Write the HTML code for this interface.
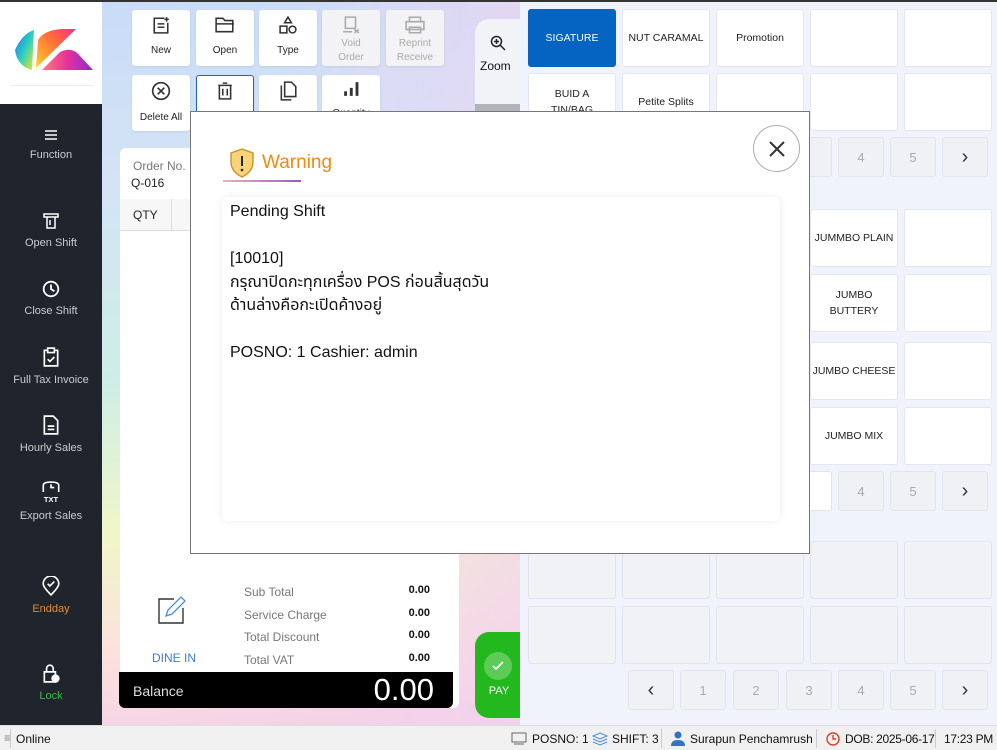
<!DOCTYPE html>
<html><head><meta charset="utf-8"><style>
*{box-sizing:border-box;margin:0;padding:0}
body{width:997px;height:750px;overflow:hidden;position:relative;font-family:"Liberation Sans",sans-serif;background:#fff}
.a{position:absolute}
.bg{left:102px;top:0;width:418px;height:725px;background:linear-gradient(175deg,#c9dcf7 0%,#d4e4f6 25%,#cdeee6 50%,#f1f6c8 70%,#fae3dc 85%,#f4cfe8 100%)}
.bg2{left:102px;top:0;width:418px;height:725px;background:linear-gradient(90deg,rgba(255,255,255,0) 40%,rgba(240,210,240,.6) 100%)}
.side{left:0;top:104px;width:102px;height:621px;background:#1f242d}
.si{position:absolute;left:0;width:102px;text-align:center;color:#c9ccd1;font-size:11px;white-space:nowrap}
.si svg{display:block;margin:0 auto 7px}
.tb{position:absolute;width:58px;height:56px;background:#fff;border-radius:3px;text-align:center;font-size:10px;color:#222;box-shadow:0 1px 2px rgba(0,0,0,.08);white-space:nowrap}
.tb svg{display:block;margin:6px auto 11px}
.tb.dis{background:#f3f3f5;color:#aaa}
.rp{left:520px;top:0;width:477px;height:725px;background:#f0f3fb}
.g{position:absolute;width:88px;height:58px;background:#fff;border:1px solid #e3e6ee;border-radius:3px;font-size:10.5px;color:#222;display:flex;align-items:center;justify-content:center;text-align:center;line-height:16px}
.ge{background:#f0f2f6;border-color:#e2e4ea}
.pg{position:absolute;width:46px;height:40px;background:#f0f1f4;border:1px solid #e2e4ea;border-radius:3px;color:#aaa;font-size:13px;display:flex;align-items:center;justify-content:center}
.status{left:0;top:725px;width:997px;height:25px;background:#f0f0f0;border-top:1px solid #ddd;font-size:12px;color:#111}
.status span{position:absolute;top:6px;white-space:nowrap}
.sep{position:absolute;top:3px;width:1px;height:19px;background:#ccc}
</style></head><body>
<div class="a" style="left:0;top:0;width:997px;height:2px;background:#333;z-index:5"></div>
<div class="a bg"></div><div class="a bg2"></div>
<div class="a" style="left:0;top:0;width:102px;height:104px;background:#fff"></div>
<svg class="a" style="left:12px;top:28px" width="84" height="44" viewBox="0 0 84 44">
<defs><linearGradient id="l1" x1="0" y1="0" x2="1" y2="1"><stop offset="0" stop-color="#3b5bff"/><stop offset=".5" stop-color="#27d0c0"/><stop offset="1" stop-color="#f7e22a"/></linearGradient>
<linearGradient id="l2" x1="0" y1="1" x2="1" y2="0"><stop offset="0" stop-color="#ffd02a"/><stop offset=".6" stop-color="#ff6a3a"/><stop offset="1" stop-color="#ff2b8a"/></linearGradient>
<linearGradient id="l3" x1="0" y1="0" x2="1" y2="0"><stop offset="0" stop-color="#ff7a7a"/><stop offset=".5" stop-color="#e7309a"/><stop offset="1" stop-color="#8a2be2"/></linearGradient></defs>
<path d="M3 22 Q10 6 22 2 L20 42 Q5 38 3 22Z" fill="url(#l1)"/>
<path d="M24 40 L26 12 Q32 2 50 1 L64 1 Z" fill="url(#l2)"/>
<path d="M30 42 L48 24 Q60 18 68 28 L81 42Z" fill="url(#l3)"/>
</svg>
<div class="a" style="left:10px;top:85px;width:84px;height:1px;background:#eee"></div>
<div class="a side"></div>
<div class="si" style="top:128px"><svg width="16" height="14" viewBox="0 0 16 14"><path d="M2 3h12M2 7h12M2 11h12" stroke="#fff" stroke-width="1.6"/></svg>Function</div>
<div class="si" style="top:212px"><svg width="18" height="18" viewBox="0 0 16 18" fill="none" stroke="#fff" stroke-width="1.5"><path d="M1 2h14v3H1zM4 5v11h8V5M7 8v5"/></svg>Open Shift</div>
<div class="si" style="top:280px"><svg width="18" height="18" viewBox="0 0 16 16" fill="none" stroke="#fff" stroke-width="1.6"><circle cx="8" cy="8" r="6.5"/><path d="M8 4v4l3 2"/></svg>Close Shift</div>
<div class="si" style="top:347px"><svg width="18" height="20" viewBox="0 0 16 18" fill="none" stroke="#fff" stroke-width="1.5"><path d="M5 3H2v14h12V3h-3M5 1h6v4H5zM5 11l2 2 4-4"/></svg>Full Tax Invoice</div>
<div class="si" style="top:415px"><svg width="16" height="20" viewBox="0 0 14 18" fill="none" stroke="#fff" stroke-width="1.5"><path d="M1 1h8l4 4v12H1zM4 10h6M4 13h6"/></svg>Hourly Sales</div>
<div class="si" style="top:481px"><svg width="22" height="22" viewBox="0 0 20 20" fill="none" stroke="#fff" stroke-width="1.5"><path d="M3 10V4Q3 1 10 1Q17 1 17 4V10M10 3v3h3"/><text x="10" y="19" font-size="7" fill="#fff" stroke="none" text-anchor="middle" font-weight="bold" font-family="Liberation Sans">TXT</text></svg>Export Sales</div>
<div class="si" style="top:576px;color:#e8892c"><svg width="18" height="20" viewBox="0 0 16 18" fill="none" stroke="#fff" stroke-width="1.5"><path d="M8 17Q1 10 1 7a7 7 0 0 1 14 0q0 3-7 10zM5 7l2 2 4-4"/></svg>Endday</div>
<div class="si" style="top:663px;color:#3fb84a"><svg width="18" height="20" viewBox="0 0 16 18" fill="none" stroke="#fff" stroke-width="1.5"><path d="M2 8h10v9H2zM4 8V5a3 3 0 0 1 6 0v3"/><circle cx="12" cy="14" r="3" fill="#fff"/></svg>Lock</div>
<div class="tb" style="left:132px;top:10px"><svg width="18" height="18" viewBox="0 0 16 16" fill="none" stroke="#333" stroke-width="1.4"><path d="M11 2H2v13h12V6M5 7h6M5 10h6M13 1v4M11 3h4"/></svg>New</div>
<div class="tb" style="left:196px;top:10px"><svg width="20" height="18" viewBox="0 0 18 16" fill="none" stroke="#333" stroke-width="1.4"><path d="M1 2h6l2 2h7v10H1zM1 7h16"/></svg>Open</div>
<div class="tb" style="left:259px;top:10px"><svg width="18" height="18" viewBox="0 0 16 16" fill="none" stroke="#333" stroke-width="1.4"><path d="M8 1l3 5H5zM1 9h6v6H1z"/><circle cx="12" cy="12" r="3"/></svg>Type</div>
<div class="tb dis" style="left:322px;top:10px"><svg width="18" height="18" viewBox="0 0 16 16" fill="none" stroke="#aaa" stroke-width="1.4" style="margin-bottom:3px"><path d="M3 1h9v10H3zM1 14h8M11 12l4 3M15 12l-4 3"/></svg><span style="display:block;line-height:14px">Void<br>Order</span></div>
<div class="tb dis" style="left:386px;top:10px"><svg width="20" height="18" viewBox="0 0 18 16" fill="none" stroke="#aaa" stroke-width="1.4" style="margin-bottom:3px"><path d="M4 1h10v4H4zM1 5h16v7H1zM4 10h10v5H4z"/></svg><span style="display:block;line-height:14px">Reprint<br>Receive</span></div>
<div class="tb" style="left:132px;top:75px"><svg width="20" height="20" viewBox="0 0 18 18" fill="none" stroke="#333" stroke-width="1.5"><circle cx="9" cy="9" r="7.5"/><path d="M6 6l6 6M12 6l-6 6"/></svg>Delete All</div>
<div class="tb" style="left:196px;top:75px;border:1.5px solid #1f67b8"><svg width="16" height="18" viewBox="0 0 14 16" fill="none" stroke="#333" stroke-width="1.4"><path d="M1 3h12M5 1h4M2 3v12h10V3M5 6v6M9 6v6"/></svg>Delete</div>
<div class="tb" style="left:259px;top:75px"><svg width="18" height="20" viewBox="0 0 16 18" fill="none" stroke="#333" stroke-width="1.4"><path d="M5 1h6l4 4v9H5zM2 4v13h9"/></svg>Repeat</div>
<div class="tb" style="left:322px;top:75px"><svg width="16" height="16" viewBox="0 0 14 14" fill="#333"><rect x="1" y="9" width="2.5" height="4"/><rect x="6" y="6" width="2.5" height="7"/><rect x="11" y="1" width="2.5" height="12"/></svg>Quantity</div>
<div class="a" style="left:120px;top:148px;width:339px;height:560px;background:#fff;border-radius:6px"></div>
<div class="a" style="left:133px;top:159px;font-size:12px;color:#777">Order No.</div>
<div class="a" style="left:131px;top:176px;font-size:12px;color:#222">Q-016</div>
<div class="a" style="left:120px;top:199px;width:339px;height:32px;background:#f7f7f7;border-bottom:1px solid #ddd"></div>
<div class="a" style="left:171px;top:199px;width:1px;height:32px;background:#ddd"></div>
<div class="a" style="left:133px;top:208px;font-size:12px;color:#222">QTY</div>
<svg class="a" style="left:156px;top:594px" width="32" height="32" viewBox="0 0 32 32" fill="none"><path d="M18 5H3v24h24V14" stroke="#333" stroke-width="1.4"/><path d="M10 22l2-6 13-13 4 4-13 13z" stroke="#4a90d9" stroke-width="1.3"/></svg>
<div class="a" style="left:152px;top:651px;font-size:12px;color:#3f7fc6">DINE IN</div>
<div class="a" style="left:244px;top:581px;font-size:12px;color:#777;line-height:22.5px">Sub Total<br>Service Charge<br>Total Discount<br>Total VAT</div>
<div class="a" style="left:380px;top:579px;width:50px;text-align:right;font-size:11px;font-weight:bold;color:#111;line-height:22.5px">0.00<br>0.00<br>0.00<br>0.00</div>
<div class="a" style="left:119px;top:672px;width:334px;height:36px;background:#000;border-radius:0 0 6px 6px"></div>
<div class="a" style="left:133px;top:683px;font-size:14px;color:#ddd">Balance</div>
<div class="a" style="left:330px;top:672px;width:104px;text-align:right;font-size:31px;color:#fff;line-height:36px">0.00</div>
<div class="a" style="left:475px;top:632px;width:50px;height:86px;background:#22b81e;border-radius:14px 0 0 14px"></div>
<div class="a" style="left:484px;top:652px;width:28px;height:28px;border-radius:50%;background:#5ccc57"></div>
<svg class="a" style="left:491px;top:660px" width="14" height="12" viewBox="0 0 14 12"><path d="M2 6l3 3 7-7" stroke="#fff" stroke-width="1.6" fill="none"/></svg>
<div class="a" style="left:475px;top:685px;width:48px;text-align:center;font-size:11px;color:#fff">PAY</div>
<div class="a" style="left:475px;top:19px;width:50px;height:100px;background:#f2f3f7;border-radius:14px 0 0 0"></div>
<div class="a" style="left:475px;top:104px;width:45px;height:10px;background:#b0b3ba"></div>
<svg class="a" style="left:490px;top:35px" width="16" height="16" viewBox="0 0 16 16" fill="none" stroke="#222" stroke-width="1.5"><circle cx="6.5" cy="6.5" r="5"/><path d="M10 10l5 5M4 6.5h5M6.5 4v5"/></svg>
<div class="a" style="left:480px;top:59px;font-size:12px;color:#111">Zoom</div>
<div class="a rp"></div>
<div class="g" style="left:528px;top:9px;background:#0563c1;border-color:#0563c1;color:#fff">SIGATURE</div>
<div class="g" style="left:622px;top:9px">NUT CARAMAL</div>
<div class="g" style="left:716px;top:9px">Promotion</div>
<div class="g" style="left:810px;top:9px"></div>
<div class="g" style="left:904px;top:9px"></div>
<div class="g" style="left:528px;top:73px;align-items:flex-start;padding-top:12px">BUID A<br>TIN/BAG</div>
<div class="g" style="left:622px;top:73px">Petite Splits</div>
<div class="g" style="left:716px;top:73px"></div>
<div class="g" style="left:810px;top:73px"></div>
<div class="g" style="left:904px;top:73px"></div>
<div class="pg" style="left:786px;top:137px"></div>
<div class="pg" style="left:838px;top:137px">4</div>
<div class="pg" style="left:890px;top:137px">5</div>
<div class="pg" style="left:942px;top:137px;color:#333;font-size:20px">›</div>
<div class="g" style="left:810px;top:209px">JUMMBO PLAIN</div>
<div class="g" style="left:904px;top:209px"></div>
<div class="g" style="left:810px;top:274px">JUMBO<br>BUTTERY</div>
<div class="g" style="left:904px;top:274px"></div>
<div class="g" style="left:810px;top:342px;white-space:nowrap;font-size:10.5px">JUMBO CHEESE</div>
<div class="g" style="left:904px;top:342px"></div>
<div class="g" style="left:810px;top:407px">JUMBO MIX</div>
<div class="g" style="left:904px;top:407px"></div>
<div class="pg" style="left:786px;top:471px;background:#fff"></div>
<div class="pg" style="left:838px;top:471px">4</div>
<div class="pg" style="left:890px;top:471px">5</div>
<div class="pg" style="left:942px;top:471px;color:#333;font-size:20px">›</div>
<div class="g ge" style="left:528px;top:541px"></div><div class="g ge" style="left:622px;top:541px"></div><div class="g ge" style="left:716px;top:541px"></div><div class="g ge" style="left:810px;top:541px"></div><div class="g ge" style="left:904px;top:541px"></div>
<div class="g ge" style="left:528px;top:606px"></div><div class="g ge" style="left:622px;top:606px"></div><div class="g ge" style="left:716px;top:606px"></div><div class="g ge" style="left:810px;top:606px"></div><div class="g ge" style="left:904px;top:606px"></div>
<div class="pg" style="left:628px;top:670px;color:#333;font-size:20px">‹</div>
<div class="pg" style="left:680px;top:670px">1</div>
<div class="pg" style="left:733px;top:670px">2</div>
<div class="pg" style="left:786px;top:670px">3</div>
<div class="pg" style="left:838px;top:670px">4</div>
<div class="pg" style="left:890px;top:670px">5</div>
<div class="pg" style="left:942px;top:670px;color:#333;font-size:20px">›</div>
<div class="a" style="left:190px;top:111px;width:620px;height:443px;background:#fff;border:1px solid #777;z-index:10">
<svg class="a" style="left:38px;top:36px" width="26" height="30" viewBox="0 0 26 30"><path d="M13 1L2 5v9c0 7 5 12 11 15 6-3 11-8 11-15V5z" fill="#f7d47a" stroke="#c9922a" stroke-width="1.4"/><path d="M13 8v10" stroke="#222" stroke-width="2"/><circle cx="13" cy="22" r="1.3" fill="#222"/></svg>
<div class="a" style="left:71px;top:40px;font-size:19px;color:#ef8a12">Warning</div>
<div class="a" style="left:32px;top:68px;width:78px;height:2px;background:linear-gradient(90deg,#e8b3c0,#9b59c5)"></div>
<div class="a" style="left:562px;top:13px;width:47px;height:47px;border-radius:50%;border:1px solid #aab;"></div>
<svg class="a" style="left:577px;top:28px" width="18" height="18" viewBox="0 0 18 18"><path d="M2 2l14 14M16 2L2 16" stroke="#333" stroke-width="2"/></svg>
<div class="a" style="left:31px;top:85px;width:558px;height:324px;background:#fff;border-radius:6px;box-shadow:0 0 8px rgba(0,0,0,.08)"></div>
<div class="a" style="left:39px;top:88px;font-size:16px;color:#111;line-height:23.5px;font-family:'Liberation Sans','Noto Sans Thai','DejaVu Sans',sans-serif">Pending Shift<br><br>[10010]<br>กรุณาปิดกะทุกเครื่อง POS ก่อนสิ้นสุดวัน<br>ด้านล่างคือกะเปิดค้างอยู่<br><br>POSNO: 1 Cashier: admin</div>
</div>
<div class="a status">
<span style="left:4px;color:#888;top:5px">≡</span>
<div class="sep" style="left:10px"></div>
<span style="left:16px">Online</span>
<svg class="a" style="left:511px;top:6px" width="16" height="14" viewBox="0 0 16 14" fill="none" stroke="#666"><rect x="1" y="1" width="14" height="9"/><path d="M3 12h10"/></svg>
<span style="left:532px">POSNO: 1</span>
<svg class="a" style="left:592px;top:5px" width="16" height="16" viewBox="0 0 16 16" fill="none" stroke="#4a8fd6"><path d="M8 2l7 3-7 3-7-3zM1 8l7 3 7-3M1 11l7 3 7-3"/></svg>
<span style="left:612px">SHIFT: 3</span>
<div class="sep" style="left:661px"></div>
<svg class="a" style="left:671px;top:5px" width="14" height="15" viewBox="0 0 14 15" fill="#2f73c2"><circle cx="7" cy="4" r="3.5"/><path d="M0 15q0-6 7-6t7 6z"/></svg>
<span style="left:690px">Surapun Penchamrush</span>
<div class="sep" style="left:816px"></div>
<svg class="a" style="left:826px;top:6px" width="14" height="14" viewBox="0 0 14 14" fill="none" stroke="#d8402a" stroke-width="1.4"><circle cx="7" cy="7" r="6"/><path d="M7 3v4h3"/></svg>
<span style="left:845px;letter-spacing:-0.3px">DOB: 2025-06-17</span>
<div class="sep" style="left:935px"></div>
<span style="left:944px;letter-spacing:-0.3px">17:23 PM</span>
</div>
</body></html>
